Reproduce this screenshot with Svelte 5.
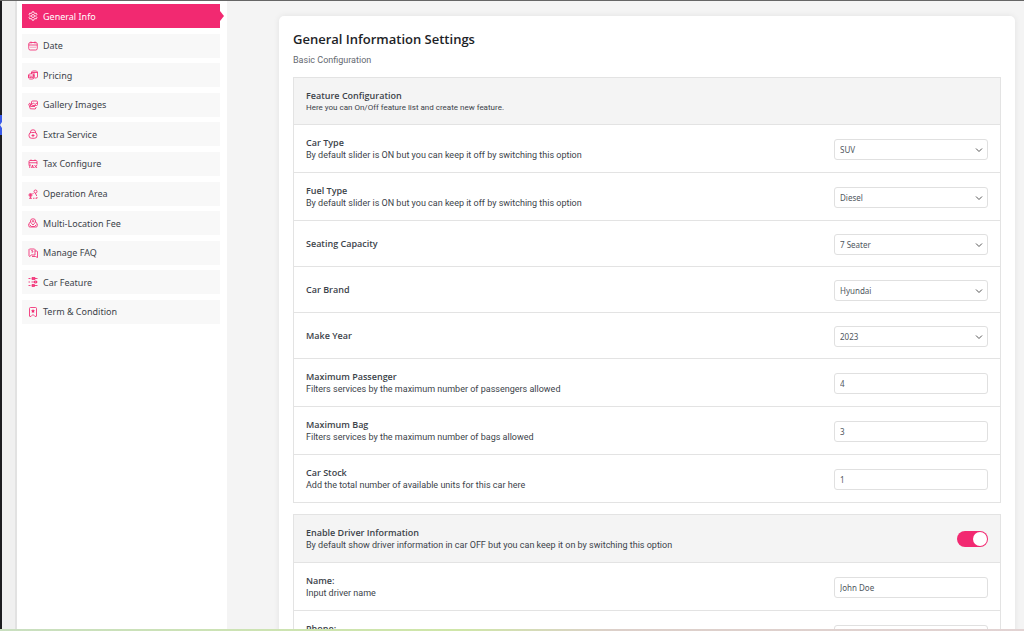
<script>
  let activeItem = $state('general')
  let driverEnabled = $state(true)

  const menu = [
    { id: 'general', label: 'General Info' },
    { id: 'date', label: 'Date' },
    { id: 'pricing', label: 'Pricing' },
    { id: 'gallery', label: 'Gallery Images' },
    { id: 'extra', label: 'Extra Service' },
    { id: 'tax', label: 'Tax Configure' },
    { id: 'area', label: 'Operation Area' },
    { id: 'fee', label: 'Multi-Location Fee' },
    { id: 'faq', label: 'Manage FAQ' },
    { id: 'feature', label: 'Car Feature' },
    { id: 'term', label: 'Term & Condition' },
  ]

  const sliderDesc = 'By default slider is ON but you can keep it off by switching this option'

  let features = $state([
    { id: 'car-type', label: 'Car Type', desc: sliderDesc, value: 'SUV', options: ['SUV', 'Sedan', 'Hatchback'] },
    { id: 'fuel-type', label: 'Fuel Type', desc: sliderDesc, value: 'Diesel', options: ['Diesel', 'Petrol', 'Electric'] },
    { id: 'seating', label: 'Seating Capacity', value: '7 Seater', options: ['4 Seater', '5 Seater', '7 Seater'] },
    { id: 'brand', label: 'Car Brand', value: 'Hyundai', options: ['Hyundai', 'Toyota', 'Ford'] },
    { id: 'year', label: 'Make Year', value: '2023', options: ['2022', '2023', '2024'] },
    { id: 'max-passenger', label: 'Maximum Passenger', desc: 'Filters services by the maximum number of passengers allowed', value: '4' },
    { id: 'max-bag', label: 'Maximum Bag', desc: 'Filters services by the maximum number of bags allowed', value: '3' },
    { id: 'stock', label: 'Car Stock', desc: 'Add the total number of available units for this car here', value: '1' },
  ])

  let driver = $state([
    { id: 'driver-name', label: 'Name:', desc: 'Input driver name', value: 'John Doe' },
    { id: 'driver-phone', label: 'Phone:', desc: 'Input driver phone', value: '' },
  ])
</script>

{#snippet icon(id)}
  <svg class="icon" viewBox="0 0 20 20" aria-hidden="true">
    {#if id === 'general'}
      <path d="M8.5 1.5h3l.6 2.5 1.8 1 2.5-.8 1.5 2.6-1.9 1.9v2.6l1.9 1.9-1.5 2.6-2.5-.8-1.8 1-.6 2.5h-3l-.6-2.5-1.8-1-2.5.8-1.5-2.6L4 11.3V8.7L2.1 6.8l1.5-2.6 2.5.8 1.8-1z" />
      <circle cx="10" cy="10" r="3" />
    {:else if id === 'date'}
      <rect x="1.5" y="3" width="17" height="15" rx="3" />
      <path d="M1.5 8h17M6 1v4M14 1v4M5 12.5h2M9 12.5h2M13 12.5h2" />
    {:else if id === 'pricing'}
      <path d="M7 8V4l2-2h8l2 2v10l-2 2h-4M7 5h12M12 5v10" />
      <ellipse cx="6.5" cy="10" rx="5.5" ry="2.5" />
      <path d="M1 10v6c0 3 11 3 11 0v-6M1 13c0 3 11 3 11 0" />
    {:else if id === 'gallery'}
      <rect x="7" y="2" width="12" height="9" rx="2" />
      <path d="M7 9l4-3 3 3 4-3M4 6L1.5 8l3 9.5 10 .5 2-4M5 7v6h9" />
    {:else if id === 'extra'}
      <path d="M5 8V6a5 4.5 0 0 1 10 0v2" />
      <rect x="2" y="7" width="16" height="11.5" rx="5" />
      <path d="M10 10v6M7 13h6" />
    {:else if id === 'tax'}
      <path d="M2 11V5q0-2 2-2h12q2 0 2 2v6M2 7.5h16M6 1v3M14 1v3" />
      <path d="M1 12h5M3.5 12v6M7 18l2-6 2 6M8 16h2M13 12l5 6M18 12l-5 6" />
    {:else if id === 'area'}
      <circle cx="15" cy="5" r="3" />
      <circle cx="5" cy="12" r="3" />
      <circle class="solid" cx="5" cy="12" r="2" />
      <path d="M15 8v3M5 15v4M2 18.5h6M10 18.5h3M17 11v3M18 16v2.5h-3M9 10l2-2" />
    {:else if id === 'fee'}
      <path d="M10 14C6 10 5 8.5 5 6a5 4.5 0 0 1 10 0c0 2.500-1 4-5 8z" />
      <circle cx="10" cy="6.5" r="1.5" />
      <path d="M5 7l-4 6 1.500 5h15l1.500-5-4-6M3 13l4 4h6l4-4" />
    {:else if id === 'faq'}
      <path d="M3 2h10l1 1v11H7l-4 3-1-1V3zM14 6h4l1 1v12l-4-2H8" />
      <path d="M6 6q2-2 4 0 0 2-2 3v1M8 12v.5" />
    {:else if id === 'feature'}
      <path d="M1 3h4M1 10h3M1 17h4M8 3h11M7 10h12M8 17h11" />
      <path d="M8 1h6v4H8zM13 8h4v4h-4zM8 15h5v4H8z" />
    {:else}
      <path d="M3 18.5V3q0-2 2-2h10q2 0 2 2v15.5l-3 .5-4-4-4 4z" />
      <path class="solid" d="M10 4l1.300 2.600 2.700.4-2 2 .5 3-2.500-1.500L7.500 12l.5-3-2-2 2.700-.4z" />
    {/if}
  </svg>
{/snippet}

{#snippet row(field)}
  <div class="row">
    <label class="row-text" for={field.id}>
      <span class="row-title">{field.label}</span>
      {#if field.desc}<span class="row-desc">{field.desc}</span>{/if}
    </label>
    {#if field.options}
      <div class="select-wrap">
        <select id={field.id} class="control" bind:value={field.value}>
          {#each field.options as option}
            <option>{option}</option>
          {/each}
        </select>
        <svg class="chevron" viewBox="0 0 8 6" aria-hidden="true"><path d="M1 1.5L4 4.5l3-3" /></svg>
      </div>
    {:else}
      <input id={field.id} class="control" type="text" bind:value={field.value} />
    {/if}
  </div>
{/snippet}

<div class="page">
  <div class="screen">
    <div class="admin-rail"><span class="rail-current"></span></div>
    <div class="gutter"></div>
    <nav class="sidebar">
      <div class="menu">
        {#each menu as item}
          <button class="menu-item" class:active={activeItem === item.id} onclick={() => (activeItem = item.id)}>
            {@render icon(item.id)}
            <span>{item.label}</span>
          </button>
        {/each}
      </div>
    </nav>

    <main class="content">
      <div class="panel">
        <h1>General Information Settings</h1>
        <p class="subtitle">Basic Configuration</p>

        <section class="card">
          <header class="row row-head">
            <div class="row-text">
              <h2 class="row-title">Feature Configuration</h2>
              <p class="row-desc row-note">Here you can On/Off feature list and create new feature.</p>
            </div>
          </header>
          {#each features as field}
            {@render row(field)}
          {/each}
        </section>

        <section class="card">
          <header class="row row-head">
            <label class="row-text" for="driver-enabled">
              <span class="row-title">Enable Driver Information</span>
              <span class="row-desc">By default show driver information in car OFF but you can keep it on by switching this option</span>
            </label>
            <input id="driver-enabled" class="switch" type="checkbox" bind:checked={driverEnabled} />
          </header>
          {#if driverEnabled}
            {#each driver as field}
              {@render row(field)}
            {/each}
          {/if}
        </section>
      </div>
    </main>
  </div>
  <div class="bottom-strip"></div>
</div>

<style>
  :global(body) {
    margin: 0;
    background: #f4f4f4;
  }
  .page {
    display: flex;
    flex-direction: column;
    height: 100vh;
    overflow: hidden;
    color: #3c434a;
    font-family: 'Open Sans', 'Noto Sans', sans-serif;
    font-size: 9px;
    line-height: 12px;
  }
  .screen {
    flex: 1;
    display: flex;
    min-height: 0;
    overflow: hidden;
    border-top: 1px solid #666;
  }
  .bottom-strip {
    flex: none;
    height: 2px;
    background: linear-gradient(90deg, #c9dfc0, #cfe6a8 45%, #dccfc9 60%, #e2d3d3);
  }
  .admin-rail {
    position: relative;
    flex: none;
    width: 2px;
    background: #1d1d20;
  }
  .rail-current {
    position: absolute;
    top: 114px;
    left: 0;
    width: 2px;
    height: 20px;
    background: #3858e9;
  }
  .rail-current::after {
    content: '';
    position: absolute;
    top: 7px;
    right: 0;
    border: 3px solid transparent;
    border-left-width: 0;
    border-right: 2px solid #f0f0f1;
  }
  .gutter {
    flex: none;
    width: 13px;
    background: #f0f0f0;
    border-right: 2px solid #e2e2e2;
  }
  .sidebar {
    flex: none;
    box-sizing: border-box;
    width: 210px;
    padding: 3px 7px 0 5px;
    background: #fff;
  }
  .menu {
    display: flex;
    flex-direction: column;
    justify-content: space-between;
    height: 320px;
  }
  .menu-item {
    position: relative;
    display: flex;
    align-items: center;
    gap: 5px;
    height: 24px;
    padding: 0 6px;
    border: 0;
    background: #f8f8f8;
    color: #3c434a;
    font-family: 'Noto Sans', 'Open Sans', sans-serif;
    font-size: 9px;
    text-align: left;
    cursor: pointer;
  }
  .menu-item.active {
    background: #f22971;
    color: #fff;
  }
  .menu-item.active::after {
    content: '';
    position: absolute;
    top: 7px;
    left: 100%;
    border: 5px solid transparent;
    border-left: 4px solid #f22971;
    border-right: 0;
  }
  .icon {
    flex: none;
    width: 10px;
    height: 10px;
    fill: none;
    stroke: #f22971;
    stroke-width: 1.7;
  }
  .icon .solid { fill: #f22971; stroke: none; }
  .active .icon { stroke: #fff; }
  .content {
    flex: 1;
    min-width: 0;
    padding: 15px 9px 0 52px;
    background: #f4f4f4;
  }
  .panel {
    padding: 14px;
    border-radius: 5px;
    background: #fff;
    box-shadow: 0 0 6px rgba(0, 0, 0, 0.08);
  }
  h1 {
    margin: 0;
    color: #1d2327;
    font-size: 13px;
    font-weight: 600;
    line-height: 18px;
  }
  .subtitle {
    margin: 6px 0 11px;
    color: #646970;
    font-family: Roboto, 'Noto Sans', sans-serif;
  }
  .card {
    margin-bottom: 11px;
    border: 1px solid #e3e3e3;
    border-top: 0;
  }
  .row {
    box-sizing: border-box;
    display: flex;
    align-items: center;
    justify-content: space-between;
    gap: 12px;
    min-height: 46px;
    padding: 12px 12px 11px;
    border-top: 1px solid #e3e3e3;
  }
  .row-head { background: #f4f4f4; }
  .row-text {
    display: flex;
    flex-direction: column;
  }
  .row-title {
    margin: 0;
    font-size: 9px;
    font-weight: 600;
    line-height: 12px;
  }
  .row-desc {
    margin: 0;
    font-family: Roboto, 'Noto Sans', sans-serif;
    line-height: 12px;
  }
  .row-note {
    font-size: 8px;
    line-height: 11px;
  }
  .select-wrap { position: relative; }
  .control {
    display: block;
    box-sizing: border-box;
    width: 154px;
    height: 21px;
    padding: 0 5px;
    border: 1px solid #e0e0e0;
    border-radius: 3px;
    outline: none;
    background: #fff;
    color: #50575e;
    font-family: 'Noto Sans', 'Open Sans', sans-serif;
    font-size: 8px;
    appearance: none;
  }
  .chevron {
    position: absolute;
    top: 8px;
    right: 5px;
    width: 8px;
    height: 6px;
    fill: none;
    stroke: #555;
    pointer-events: none;
  }
  .switch {
    position: relative;
    flex: none;
    width: 31px;
    height: 16px;
    margin: 0;
    border-radius: 8px;
    background: #ccc;
    appearance: none;
    cursor: pointer;
  }
  .switch::after {
    content: '';
    position: absolute;
    top: 1px;
    left: 1px;
    width: 14px;
    height: 14px;
    border-radius: 50%;
    background: #fff;
  }
  .switch:checked { background: #f22971; }
  .switch:checked::after { left: 16px; }
</style>
